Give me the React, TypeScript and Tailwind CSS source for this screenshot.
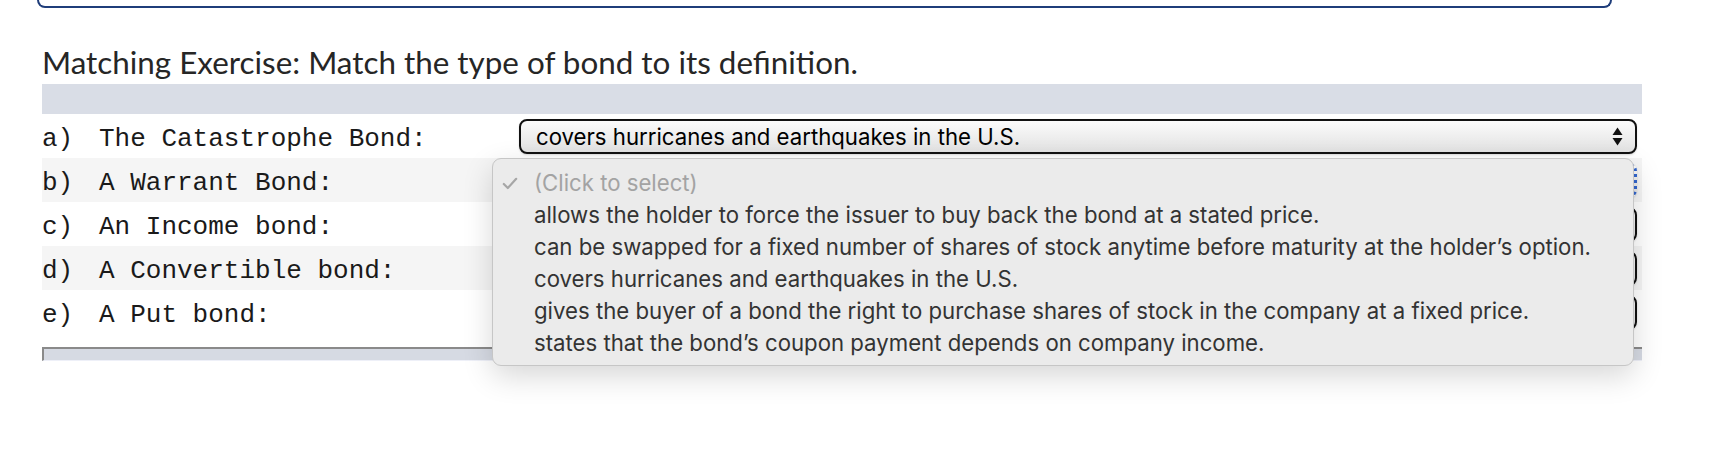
import React from "react";

const rows = [
  { key: "a)", label: "The Catastrophe Bond:", bg: "bg-white" },
  { key: "b)", label: "A Warrant Bond:", bg: "bg-[#f5f5f5]" },
  { key: "c)", label: "An Income bond:", bg: "bg-white" },
  { key: "d)", label: "A Convertible bond:", bg: "bg-[#f5f5f5]" },
  { key: "e)", label: "A Put bond:", bg: "bg-white" },
];

const options = [
  "allows the holder to force the issuer to buy back the bond at a stated price.",
  "can be swapped for a fixed number of shares of stock anytime before maturity at the holder\u2019s option.",
  "covers hurricanes and earthquakes in the U.S.",
  "gives the buyer of a bond the right to purchase shares of stock in the company at a fixed price.",
  "states that the bond\u2019s coupon payment depends on company income.",
];

function Arrows() {
  return (
    <svg width="11" height="19" viewBox="0 0 11 19" className="shrink-0">
      <path d="M5.5 0.5 L10.5 8 L0.5 8 Z" fill="#111" />
      <path d="M5.5 18.5 L10.5 11 L0.5 11 Z" fill="#111" />
    </svg>
  );
}

function Check() {
  return (
    <svg width="16" height="13" viewBox="0 0 16 13" className="shrink-0">
      <path d="M1.8 7 L5.8 11 L14.2 1.8" fill="none" stroke="#a6a6a6" strokeWidth="2.2" strokeLinecap="round" strokeLinejoin="round" />
    </svg>
  );
}

function SelectBox({ text, focused }: { text?: string; focused?: boolean }) {
  return (
    <div
      className={
        "ml-[477px] w-[1118px] h-[35px] rounded-[8px] flex items-center justify-between pl-[15px] pr-[12px] bg-gradient-to-b from-[#fbfbfb] to-[#e2e2e2] text-black text-[22.2px] shadow-[0_1px_2px_rgba(0,0,0,0.15)] " +
        (focused ? "border-[3px] border-dotted border-[#3366cc]" : "border-2 border-[#111]")
      }
      style={{ fontFamily: "Inter, 'Liberation Sans', sans-serif" }}
    >
      <span className="pt-[1px]">{text ?? ""}</span>
      <Arrows />
    </div>
  );
}

export default function App() {
  return (
    <div className="w-[1712px] h-[452px] bg-white overflow-hidden">
      <div className="ml-[37px] w-[1575px] h-[8px] border-2 border-t-0 border-[#1f3d7a] rounded-b-[12px]" />
      <div className="ml-[42px] w-[1600px]">
        <h2
          className="mt-[35px] h-[38px] leading-[38px] text-[31.4px] text-[#262626] font-normal"
          style={{ fontFamily: "Lato, 'Open Sans', sans-serif" }}
        >
          Matching Exercise: Match the type of bond to its definition.
        </h2>
        <div className="mt-[3px] h-[30px] bg-[#d9dde6]" />
        <div className="relative">
          {rows.map((r, i) => (
            <div key={r.key} className={"h-[44px] flex items-center " + r.bg}>
              <div
                className="flex items-center text-[26px] text-[#1a1a1a] absolute mt-[6px]"
                style={{ fontFamily: "'Liberation Mono', monospace" }}
              >
                <span className="w-[57px]">{r.key}</span>
                <span>{r.label}</span>
              </div>
              <SelectBox
                text={i === 0 ? "covers hurricanes and earthquakes in the U.S." : undefined}
                focused={i === 1}
              />
            </div>
          ))}
          <div
            className="absolute left-[450px] top-[44px] w-[1142px] h-[208px] rounded-[9px] border border-[#c6c6c6] bg-[#ebebeb] py-[8px] shadow-[0_10px_30px_rgba(0,0,0,0.16)] text-[22.2px] text-[#333333]"
            style={{ fontFamily: "Inter, 'Liberation Sans', sans-serif" }}
          >
            <div className="h-[32px] flex items-center text-[#a3a3a3]">
              <div className="w-[41px] flex justify-start pl-[9px]">
                <Check />
              </div>
              <span>(Click to select)</span>
            </div>
            {options.map((o) => (
              <div key={o} className="h-[32px] flex items-center pl-[41px]">
                {o}
              </div>
            ))}
          </div>
        </div>
        <div className="mt-[13px] h-[14px] bg-[#d6dae3] border-t-2 border-l-2 border-[#8a8a8a] border-b border-b-[#eef0f8]" />
      </div>
    </div>
  );
}
